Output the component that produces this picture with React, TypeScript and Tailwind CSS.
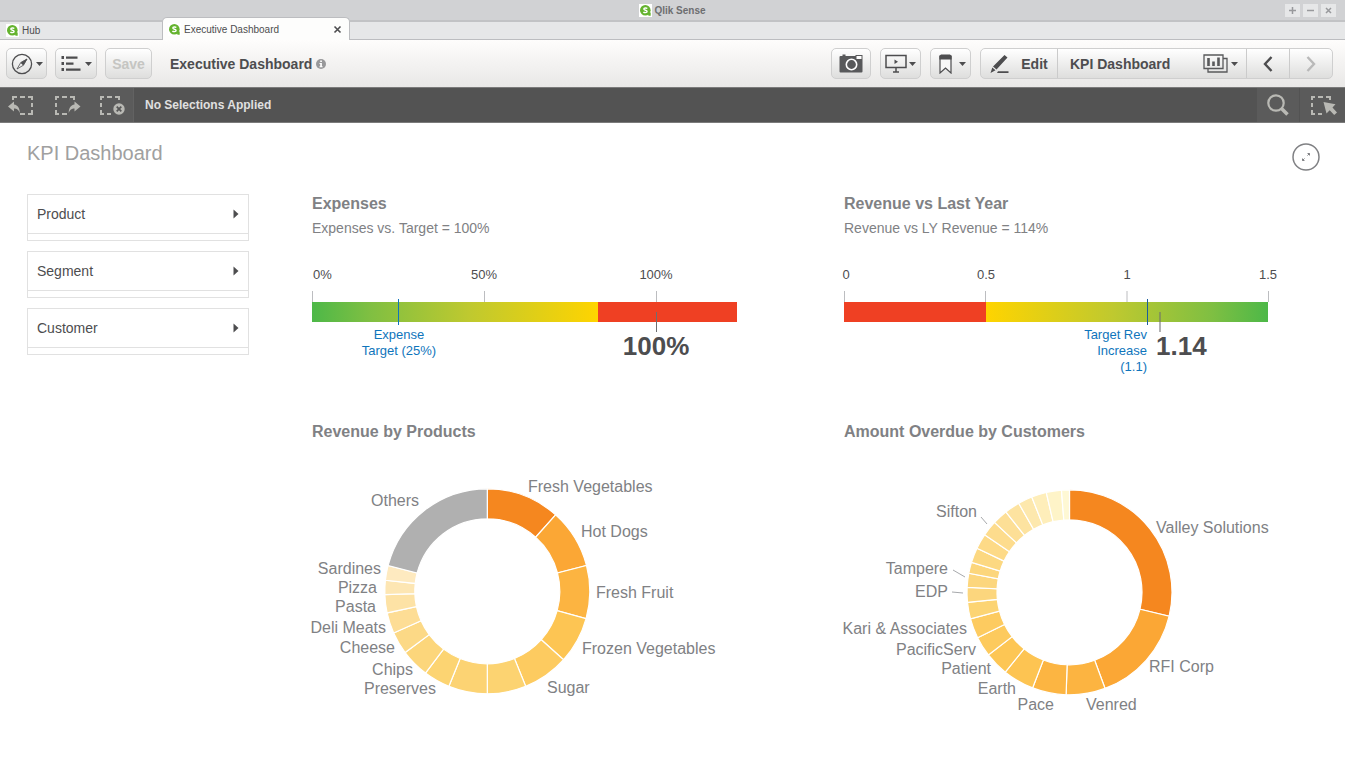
import React from "react";

const FONT = "font-['Liberation_Sans',Arial,sans-serif]";

type Label = { text: string; x: number; y: number; end?: boolean };
type Leader = [number, number, number, number];

function point(cx: number, cy: number, r: number, deg: number) {
  const a = (deg * Math.PI) / 180;
  return `${(cx + r * Math.sin(a)).toFixed(2)} ${(cy - r * Math.cos(a)).toFixed(2)}`;
}

function Donut({
  title,
  cx,
  cy,
  angles,
  colors,
  labels,
  leaders = [],
}: {
  title: string;
  cx: number;
  cy: number;
  angles: number[];
  colors: string[];
  labels: Label[];
  leaders?: Leader[];
}) {
  const outer = 102.5;
  const inner = 72.5;
  return (
    <svg viewBox="0 1 425 279" className="block w-full overflow-visible" role="img" aria-label={title}>
      {colors.map((fill, i) => {
        const a = angles[i];
        const b = angles[i + 1];
        const big = b - a > 180 ? 1 : 0;
        return (
          <path
            key={i}
            fill={fill}
            stroke="#fff"
            strokeWidth="1.2"
            d={`M${point(cx, cy, outer, a)}A${outer} ${outer} 0 ${big} 1 ${point(cx, cy, outer, b)}L${point(cx, cy, inner, b)}A${inner} ${inner} 0 ${big} 0 ${point(cx, cy, inner, a)}Z`}
          />
        );
      })}
      {leaders.map(([x1, y1, x2, y2], i) => (
        <line key={i} x1={x1} y1={y1} x2={x2} y2={y2} stroke="#a7a9ac" />
      ))}
      {labels.map((l) => (
        <text key={l.text} x={l.x} y={l.y} fontSize="16" fill="#808184" textAnchor={l.end ? "end" : "start"}>
          {l.text}
        </text>
      ))}
    </svg>
  );
}

function Tick({ x }: { x: number }) {
  return <line x1={x} x2={x} y1="53" y2="64" stroke="#bcbdc0" />;
}

function ExpensesGauge() {
  return (
    <svg viewBox="0 0 425 143" className="block w-full overflow-visible" role="img" aria-label="Expenses gauge">
      <defs>
        <linearGradient id="expenses">
          <stop offset="0" stopColor="#4db848" />
          <stop offset="0.2" stopColor="#7fbf42" />
          <stop offset="0.55" stopColor="#bfc92f" />
          <stop offset="1" stopColor="#ffd400" />
        </linearGradient>
      </defs>
      <rect x="0" y="64" width="286" height="20" fill="url(#expenses)" />
      <rect x="286" y="64" width="139" height="20" fill="#ef4023" />
      <Tick x={0.5} />
      <Tick x={172.5} />
      <Tick x={344.5} />
      <g fontSize="13" fill="#4d4d4f">
        <text x="1" y="41">0%</text>
        <text x="172" y="41" textAnchor="middle">50%</text>
        <text x="344" y="41" textAnchor="middle">100%</text>
      </g>
      <line x1="86.5" x2="86.5" y1="61" y2="87" stroke="#0f75bc" />
      <line x1="344.5" x2="344.5" y1="74" y2="94" stroke="#6d6e70" />
      <g fontSize="13" fill="#0f75bc" textAnchor="middle">
        <text x="87" y="101">Expense</text>
        <text x="87" y="117">Target (25%)</text>
      </g>
      <text x="344" y="117" fontSize="26" fontWeight="700" fill="#4d4d4f" textAnchor="middle">100%</text>
    </svg>
  );
}

function RevenueGauge() {
  return (
    <svg viewBox="0 0 425 143" className="block w-full overflow-visible" role="img" aria-label="Revenue gauge">
      <defs>
        <linearGradient id="revenue">
          <stop offset="0" stopColor="#ffd400" />
          <stop offset="0.45" stopColor="#bfc92f" />
          <stop offset="0.8" stopColor="#7fbf42" />
          <stop offset="1" stopColor="#4db848" />
        </linearGradient>
      </defs>
      <rect x="0" y="64" width="142" height="20" fill="#ef4023" />
      <rect x="142" y="64" width="282" height="20" fill="url(#revenue)" />
      <Tick x={0.5} />
      <Tick x={141.5} />
      <Tick x={283} />
      <Tick x={424.5} />
      <g fontSize="13" fill="#4d4d4f" textAnchor="middle">
        <text x="2" y="41">0</text>
        <text x="142" y="41">0.5</text>
        <text x="283" y="41">1</text>
        <text x="424" y="41">1.5</text>
      </g>
      <line x1="303.5" x2="303.5" y1="61" y2="87" stroke="#1b5e9b" />
      <line x1="316" x2="316" y1="74" y2="94" stroke="#6d6e70" strokeOpacity="0.7" strokeWidth="1.5" />
      <g fontSize="13" fill="#0f75bc" textAnchor="end">
        <text x="303" y="101">Target Rev</text>
        <text x="303" y="117">Increase</text>
        <text x="303" y="133">(1.1)</text>
      </g>
      <text x="312" y="117" fontSize="26" fontWeight="700" fill="#4d4d4f">1.14</text>
    </svg>
  );
}

function Logo() {
  return (
    <svg width="13" height="13" viewBox="0 0 13 13" className="shrink-0" aria-hidden="true">
      <rect width="13" height="13" fill="#fff" />
      <circle cx="6.3" cy="6.3" r="5.3" fill="#64b32e" />
      <path d="M8.500 8.500h3.200v3.200H9.500z" fill="#64b32e" />
      <path d="M8.300 4.500C7.600 3.900 4.800 3.600 4.800 5.100c0 1.500 3.300.8 3.300 2.400 0 1.500-2.800 1.400-3.700.5" fill="none" stroke="#fff" strokeWidth="1.4" />
    </svg>
  );
}

function Caret() {
  return (
    <svg width="7" height="4" viewBox="0 0 7 4" className="shrink-0" aria-hidden="true">
      <path d="M0 0h7L3.500 4z" fill="#4d4d4f" />
    </svg>
  );
}

const BTN =
  "flex h-[31px] shrink-0 items-center justify-center rounded-[5px] border border-[#cfcfcf] bg-linear-to-b from-white to-[#dededd] text-sm font-bold text-[#4d4d4f]";
const SEG = "flex h-full items-center justify-center border-[#cbcbcb]";

function SelectionBox({ children }: { children: React.ReactNode }) {
  return (
    <svg width="28" height="22" viewBox="0 0 28 22" fill="none" stroke="#b9b9b4" strokeWidth="2" aria-hidden="true">
      {children}
    </svg>
  );
}

function Facet({ name }: { name: string }) {
  return (
    <button
      type="button"
      className="flex h-[47px] w-full flex-col border border-[#e1e1e1] text-left text-sm text-[#4d4d4f]"
    >
      <span className="flex w-full flex-1 items-center justify-between border-b border-[#e1e1e1] px-[9px]">
        {name}
        <svg width="6" height="10" viewBox="0 0 6 10" aria-hidden="true">
          <path d="M0.500 0.500v9l5-4.500z" fill="#4d4d4f" />
        </svg>
      </span>
      <span className="h-[6px]" />
    </button>
  );
}

const PRODUCT_ANGLES = [0, 41.8, 75.4, 105.5, 131.9, 158, 180, 202, 217.1, 233.3, 246, 257.8, 268.1, 276.2, 284.6, 360];
const PRODUCT_COLORS = [
  "#f5871f", "#fba735", "#fcb441", "#fdc553", "#fdcb60", "#fcd371", "#fcd373", "#fcd472",
  "#fcd67b", "#fcd986", "#fddd95", "#fde2a5", "#fde6b3", "#feeac0", "#b0b0b0",
];
const PRODUCT_LABELS: Label[] = [
  { text: "Fresh Vegetables", x: 216, y: 51 },
  { text: "Hot Dogs", x: 269, y: 96 },
  { text: "Fresh Fruit", x: 284, y: 157 },
  { text: "Frozen Vegetables", x: 270, y: 213 },
  { text: "Sugar", x: 235, y: 252 },
  { text: "Others", x: 107, y: 65, end: true },
  { text: "Sardines", x: 69, y: 133, end: true },
  { text: "Pizza", x: 65, y: 152, end: true },
  { text: "Pasta", x: 64, y: 171, end: true },
  { text: "Deli Meats", x: 74, y: 192, end: true },
  { text: "Cheese", x: 83, y: 212, end: true },
  { text: "Chips", x: 101, y: 234, end: true },
  { text: "Preserves", x: 124, y: 253, end: true },
];

const CUSTOMER_ANGLES = [
  0, 103.5, 159.7, 181.9, 201.1, 218.8, 232.3, 243.7, 255, 264.4, 272.8, 280.7, 287, 295.5, 304.1, 313, 321.6, 330.3,
  338.4, 346.9, 355.5, 360,
];
const CUSTOMER_COLORS = [
  "#f5871f", "#fba735", "#fcb441", "#fcb542", "#fdc452", "#fdc654", "#fdca5d", "#fdcb60", "#fcd473", "#fcd67d",
  "#fcd67d", "#fcd67c", "#fcd881", "#fdda87", "#fddc8d", "#fddf96", "#fde3a0", "#fde8ad", "#feeeba", "#fef4c8", "#fef8d4",
];
const CUSTOMER_LABELS: Label[] = [
  { text: "Valley Solutions", x: 312, y: 92 },
  { text: "RFI Corp", x: 305, y: 231 },
  { text: "Venred", x: 242, y: 269 },
  { text: "Pace", x: 210, y: 269, end: true },
  { text: "Earth", x: 172, y: 253, end: true },
  { text: "Patient", x: 147, y: 233, end: true },
  { text: "PacificServ", x: 132, y: 214, end: true },
  { text: "Kari & Associates", x: 123, y: 193, end: true },
  { text: "EDP", x: 104, y: 156, end: true },
  { text: "Tampere", x: 104, y: 133, end: true },
  { text: "Sifton", x: 133, y: 76, end: true },
];
const CUSTOMER_LEADERS: Leader[] = [
  [137, 76, 143, 83],
  [109, 129, 121, 136],
  [108, 151, 119, 152],
];

const H3 = "text-base leading-5 font-bold text-[#808184]";
const SUB = "mt-1 text-sm leading-5 text-[#808184]";

export default function App() {
  return (
    <div className={`min-h-screen bg-white ${FONT}`}>
      <div className="flex h-[22px] items-center border-b-2 border-[#c2c3c5] bg-[#d1d2d4] px-[9px]">
        <div className="flex-1" />
        <div className="flex items-center gap-[2px] text-[10px] font-bold text-[#6d6e70]">
          <Logo />
          Qlik Sense
        </div>
        <div className="flex flex-1 justify-end gap-[3px]">
          {[
            { label: "Maximize", d: "M4 7.500h7M7.500 4v7" },
            { label: "Minimize", d: "M4 7.500h7" },
            { label: "Close window", d: "M5 5l5 5M10 5l-5 5" },
          ].map((b) => (
            <button key={b.label} type="button" aria-label={b.label} className="bg-[#e6e7e8]">
              <svg width="15" height="13" viewBox="0 1 15 13" stroke="#98999c" strokeWidth="1.5" aria-hidden="true">
                <path d={b.d} />
              </svg>
            </button>
          ))}
        </div>
      </div>

      <nav className="flex h-[18px] items-end bg-[#e6e7e8] text-[10px] text-[#4d4d4f]">
        <a href="#hub" className="flex h-full w-[162px] items-center gap-[3px] border-b border-[#bcbdc0] pl-[6px]">
          <Logo />
          Hub
        </a>
        <div className="relative flex h-[23px] w-[188px] shrink-0 items-center rounded-t-[5px] border border-b-0 border-[#bcbdc0] bg-[#fdfdfc] pr-[7px] pl-[5px]">
          <a href="#dashboard" className="flex flex-1 items-center gap-[3px]">
            <Logo />
            Executive Dashboard
          </a>
          <button type="button" aria-label="Close tab">
            <svg width="9" height="9" viewBox="0 0 9 9" stroke="#4d4d4f" strokeWidth="1.6" aria-hidden="true">
              <path d="M1.500 1.500l6 6M7.500 1.500l-6 6" />
            </svg>
          </button>
        </div>
        <div className="h-full flex-1 border-b border-[#bcbdc0]" />
      </nav>

      <header className="flex h-[47px] items-center justify-between bg-linear-to-b from-[#fefdfc] to-[#e9e8e7] pr-3 pl-[6px]">
        <div className="flex items-center gap-2">
          <button type="button" aria-label="Navigation" className={`${BTN} w-[41px] gap-[3px]`}>
            <svg width="22" height="22" viewBox="0 0 22 22" fill="none" stroke="#4d4d4f" aria-hidden="true">
              <circle cx="11" cy="11" r="9.6" strokeWidth="1.3" />
              <path d="M16 6L9.700 9.700 6 16l6.300-3.700z" strokeWidth="0.8" />
              <path d="M16 6L9.700 9.700l2.600 2.600z" fill="#4d4d4f" strokeWidth="0.5" />
            </svg>
            <Caret />
          </button>
          <button type="button" aria-label="Menu" className={`${BTN} w-[42px] gap-1`}>
            <svg width="20" height="18" viewBox="0 0 20 18" fill="#4d4d4f" aria-hidden="true">
              <path d="M0.500 1h2.500v3H0.500zM5 1.500h11.500v2.200H5zM0.500 7h2.500v3H0.500zM5 7.500h7.500v2.200H5zM0.500 13h2.500v3H0.500zM5 13.500h14.500v2.200H5z" />
            </svg>
            <Caret />
          </button>
          <button type="button" disabled className={`${BTN} w-[47px]`}>
            <span className="text-[#c5c5c2]">Save</span>
          </button>
          <h1 className="ml-[10px] text-sm font-bold text-[#4d4d4f]">Executive Dashboard</h1>
          <svg width="10" height="10" viewBox="0 0 10 10" className="-ml-1" aria-hidden="true">
            <circle cx="5" cy="5" r="5" fill="#98989a" />
            <path d="M4.200 1.500h1.700v1.500H4.200zM3.500 4h2.400v3.200h.7v1H3.500v-1h.7V5h-.7z" fill="#fff" />
          </svg>
        </div>

        <div className="flex items-center gap-[9px]">
          <button type="button" aria-label="Snapshot" className={`${BTN} w-10`}>
            <svg width="25" height="19" viewBox="0 0 24 19" fill="#58595b" aria-hidden="true">
              <path d="M1 2h2V0.500h3V2h10V1h7v16.500a1 1 0 0 1-1 1H1a1 1 0 0 1-1-1V3a1 1 0 0 1 1-1z" />
              <path d="M17 2h5v3h-5z" fill="#fff" />
              <circle cx="12" cy="10.500" r="5.200" fill="none" stroke="#fff" strokeWidth="1.6" />
            </svg>
          </button>
          <button type="button" aria-label="Present" className={`${BTN} w-[41px] gap-[2px]`}>
            <svg width="22" height="19" viewBox="0 0 22 19" fill="none" stroke="#4d4d4f" strokeWidth="1.5" aria-hidden="true">
              <path d="M1 1.500h20v12H1zM11 13.500v4M8 18h6" />
              <path d="M9.500 5.500v4.500l3.500-2.200z" fill="#4d4d4f" stroke="none" />
            </svg>
            <Caret />
          </button>
          <button type="button" aria-label="Bookmarks" className={`${BTN} w-[41px] gap-[7px] pl-1`}>
            <svg width="13" height="20" viewBox="0 0 13 20" aria-hidden="true">
              <path d="M1 2v17l5.500-5 5.500 5V2z" fill="#f8f8f8" stroke="#4d4d4f" strokeWidth="1.2" />
              <path d="M2 0.500h9l1.600 1.500v3.500H.400V2z" fill="#4d4d4f" />
            </svg>
            <Caret />
          </button>
          <div className={`${BTN} overflow-hidden`}>
            <button type="button" className={`${SEG} w-[77px] gap-3 border-r`}>
              <svg width="19" height="20" viewBox="0 0 19 20" fill="#4d4d4f" aria-hidden="true">
                <path d="M14.500 1l3 2.500L6.500 15.500 3 12.500zM2.300 13.500l3.200 2.700L.500 19zM8 17.200h10.500v1.700H7z" />
              </svg>
              <span>Edit</span>
            </button>
            <button type="button" className={`${SEG} w-[189px] border-r pr-2 pl-3`}>
              <span className="flex-1 text-left">KPI Dashboard</span>
              <svg width="25" height="19" viewBox="0 0 25 19" fill="none" stroke="#58595b" strokeWidth="1.3" className="mr-[3px]" aria-hidden="true">
                <path d="M1 1h19v13.500H1zM5 14.500v3.500h19V4.500h-4" />
                <path d="M5.500 4v8M10.500 7.500V12M15.500 3.500V12" strokeWidth="2.6" />
              </svg>
              <Caret />
            </button>
            <button type="button" aria-label="Previous sheet" className={`${SEG} w-[43px] border-r`}>
              <svg width="10" height="16" viewBox="0 0 10 16" fill="none" stroke="#4d4d4f" strokeWidth="2.4" aria-hidden="true">
                <path d="M8.500 1L2 8l6.500 7" />
              </svg>
            </button>
            <button type="button" aria-label="Next sheet" className={`${SEG} w-[42px]`}>
              <svg width="10" height="16" viewBox="0 0 10 16" fill="none" stroke="#b9b9b9" strokeWidth="2.4" aria-hidden="true">
                <path d="M1.500 1L8 8l-6.500 7" />
              </svg>
            </button>
          </div>
        </div>
      </header>

      <div className="flex h-9 items-stretch border-y border-[#7b7b7b] bg-[#535353]">
        <div className="flex w-[134px] items-center justify-between border-r border-[#626262] bg-[#5b5b5b] px-[7px]">
          <button type="button" aria-label="Step back">
            <SelectionBox>
              <path d="M6 6V3h4M13 3h5M21 3h4v3M25 9v4M25 16v4h-4M18 20h-5" />
              <path d="M1 12.500l6-5v3c4 .500 5.800 4 5.800 8.500-1.500-3.500-3-4.500-5.800-4.500v3z" fill="#b9b9b4" stroke="none" />
            </SelectionBox>
          </button>
          <button type="button" aria-label="Step forward">
            <SelectionBox>
              <path d="M6 3H3v3M3 9v4M3 16v4h3M9 20h5M9 3h5M17 3h4v3" />
              <path d="M27.500 12.500l-6-5v3c-4 .500-5.800 4-5.800 8.500 1.500-3.500 3-4.500 5.800-4.500v3z" fill="#b9b9b4" stroke="none" />
            </SelectionBox>
          </button>
          <button type="button" aria-label="Clear all selections">
            <SelectionBox>
              <path d="M6 3H3v3M3 9v4M3 16v4h3M9 20h4M9 3h5M17 3h4v3" />
              <circle cx="21" cy="15" r="5.7" fill="#b9b9b4" stroke="none" />
              <path d="M18.700 12.700l4.600 4.600M23.300 12.700l-4.600 4.600" stroke="#555" strokeWidth="1.7" />
            </SelectionBox>
          </button>
        </div>
        <div className="flex flex-1 items-center pl-[11px] text-xs font-bold text-[#e0e0e0]">No Selections Applied</div>
        <button type="button" aria-label="Search" className="flex w-[42px] items-center justify-center bg-[#5b5b5b]">
          <svg width="22" height="22" viewBox="0 0 22 22" fill="none" stroke="#b9b9b4" aria-hidden="true">
            <circle cx="9" cy="9" r="7.700" strokeWidth="2.2" />
            <path d="M14.500 14.500l6 6" strokeWidth="3.6" />
          </svg>
        </button>
        <button
          type="button"
          aria-label="Selections tool"
          className="flex w-[46px] items-center justify-center border-l border-[#535353] bg-[#5b5b5b]"
        >
          <SelectionBox>
            <path d="M6 3H3v3M3 9v4M3 16v4h3M9 20h4M9 3h5M17 3h4v3" />
            <path d="M14.500 8l12 2.300-3 3.200 4.500 5-2.800 2.500-4.500-4.700-3.200 3.200z" fill="#b9b9b4" stroke="none" />
          </SelectionBox>
        </button>
      </div>

      <main className="pt-5 pb-[47px]">
        <div className="flex h-7 items-start justify-between pr-[25px] pl-[27px]">
          <h2 className="text-xl leading-5 text-[#a0a0a0]">KPI Dashboard</h2>
          <button type="button" aria-label="Expand">
            <svg width="28" height="28" viewBox="0 0 28 28" fill="none" stroke="#808184" aria-hidden="true">
              <circle cx="14" cy="14" r="13" strokeWidth="1.5" />
              <path d="M15.500 12.500l2-2M12.500 15.500l-2 2" />
              <path d="M15.500 10.500h2v2M10.500 15.500v2h2" />
            </svg>
          </button>
        </div>

        <div className="mt-[23px] flex gap-[63px] pr-[76px] pl-[27px]">
          <aside className="flex w-[222px] shrink-0 flex-col gap-[10px]">
            <Facet name="Product" />
            <Facet name="Segment" />
            <Facet name="Customer" />
          </aside>
          <div className="grid min-w-0 flex-1 grid-cols-2 gap-x-[107px] gap-y-[41px]">
            <section>
              <h3 className={H3}>Expenses</h3>
              <p className={SUB}>Expenses vs. Target = 100%</p>
              <ExpensesGauge />
            </section>
            <section>
              <h3 className={H3}>Revenue vs Last Year</h3>
              <p className={SUB}>Revenue vs LY Revenue = 114%</p>
              <RevenueGauge />
            </section>
            <section>
              <h3 className={H3}>Revenue by Products</h3>
              <Donut
                title="Revenue by Products"
                cx={175.3}
                cy={150.3}
                angles={PRODUCT_ANGLES}
                colors={PRODUCT_COLORS}
                labels={PRODUCT_LABELS}
              />
            </section>
            <section>
              <h3 className={H3}>Amount Overdue by Customers</h3>
              <Donut
                title="Amount Overdue by Customers"
                cx={225.5}
                cy={151.3}
                angles={CUSTOMER_ANGLES}
                colors={CUSTOMER_COLORS}
                labels={CUSTOMER_LABELS}
                leaders={CUSTOMER_LEADERS}
              />
            </section>
          </div>
        </div>
      </main>
    </div>
  );
}
